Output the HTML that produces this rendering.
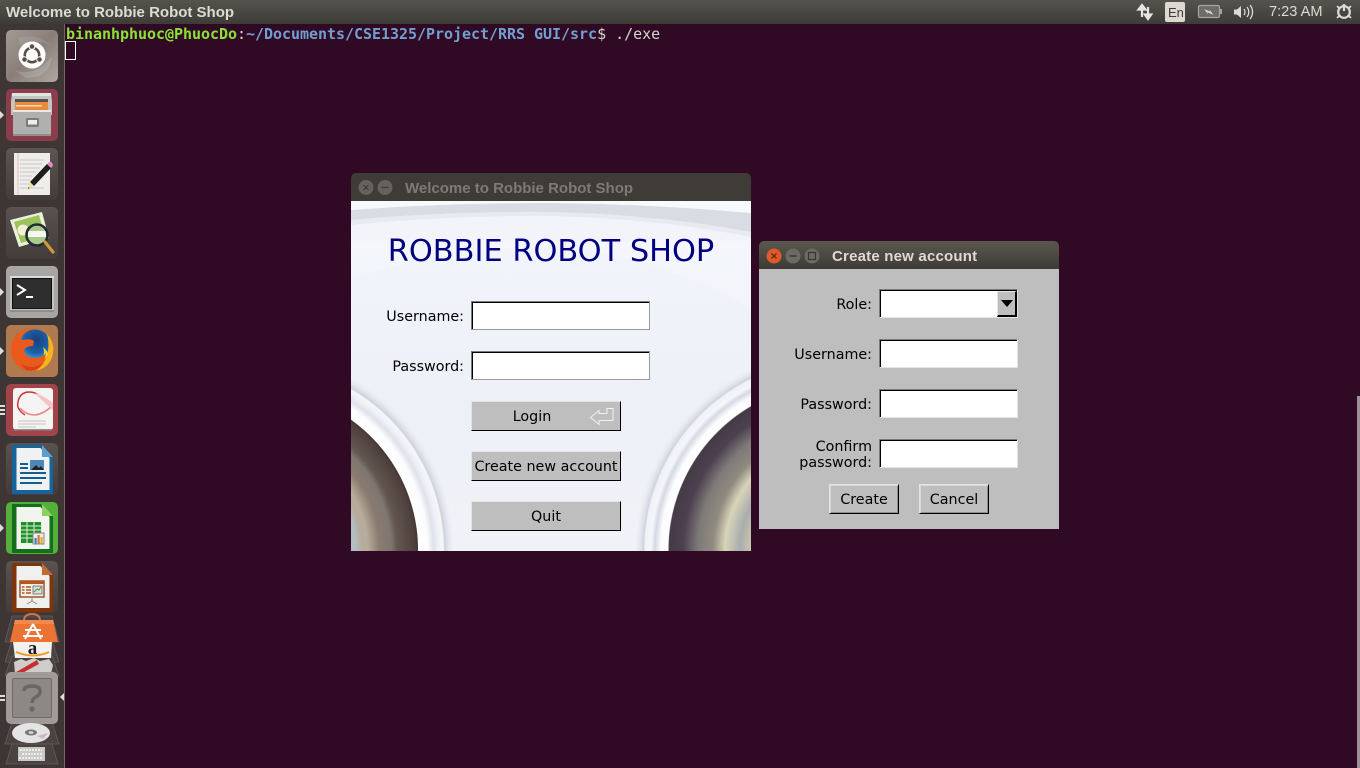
<!DOCTYPE html>
<html><head><meta charset="utf-8">
<style>
html,body{margin:0;padding:0;width:1360px;height:768px;overflow:hidden;background:#300a24}
*{box-sizing:border-box}
.a{position:absolute;white-space:nowrap}
.tk{font-family:"DejaVu Sans",sans-serif;font-size:14.3px;color:#000;line-height:16px}
.r{text-align:right}
.ent{position:absolute;background:#fff;border:1px solid;border-color:#7a7a7a #e4e4e4 #e4e4e4 #7a7a7a;box-shadow:inset 1px 1px 0 #000}
.e1{border-color:#7a7a7a #9a9a9a #9a9a9a #7a7a7a}
.btn{position:absolute;background:#bebebe;border-top:1px solid #e4e4e4;border-left:1px solid #e4e4e4;border-right:1px solid #000;border-bottom:1px solid #000;text-align:center;font-family:"DejaVu Sans",sans-serif;font-size:14.3px;color:#000;white-space:nowrap;line-height:30px}
.b2{box-shadow:inset 1px 1px 0 #d8d8d8,inset -1px -1px 0 #8e8e8e}
.tile{position:absolute;left:6px;width:52px;height:52px;border-radius:5px}
.pip{position:absolute;width:0;height:0;border-top:4px solid transparent;border-bottom:4px solid transparent;border-left:4px solid #ddd;left:0}
.dot{position:absolute;left:0;width:5px;height:2px;background:#ddd}
</style></head>
<body>
<!-- top bar -->
<div class="a" style="left:0;top:0;width:1360px;height:24px;background:linear-gradient(#54534d,#3d3c37)"></div>
<div class="a" style="left:6px;top:4px;font:bold 15px/18px 'Liberation Sans',sans-serif;color:#dfdbd2">Welcome to Robbie Robot Shop</div>
<svg class="a" style="left:1130px;top:0" width="230" height="24" viewBox="1130 0 230 24">
<path d="M1142 17V8M1138.500 9.500L1142 5l3.500 4.500z" stroke="#e8e6df" stroke-width="2.200" fill="#e8e6df"/>
<path d="M1148 7v10M1144.800 14.500l3.200 4.500 3.200-4.500z" stroke="#e8e6df" stroke-width="2.200" fill="#e8e6df"/>
<rect x="1165" y="2" width="20" height="20" rx="2" fill="#dcd9d1"/>
<rect x="1198.500" y="5.500" width="21" height="12" rx="1.500" fill="#6e6c66" stroke="#a8a59e" stroke-width="1.200"/>
<rect x="1220" y="9" width="2" height="5" fill="#a8a59e"/>
<path d="M1204 9l6 2.500-.5-2 4 5.500-6-2.800.5 2z" fill="#dcd9d2"/>
<path d="M1234 9.500h3l4-3.500v12l-4-3.500h-3z" fill="#dfdcd5"/>
<path d="M1244 9a5 5 0 0 1 0 6M1247 7a8 8 0 0 1 0 10M1250 5a11 11 0 0 1 0 14" fill="none" stroke="#dfdcd5" stroke-width="1.300"/>
<circle cx="1344" cy="12" r="5.800" fill="none" stroke="#dfdcd5" stroke-width="2.200"/>
<path d="M1344 4v7" stroke="#dfdcd5" stroke-width="2.200"/>
<path d="M1337 6l2 2M1351 6l-2 2M1337 18l2-2M1351 18l-2-2" stroke="#dfdcd5" stroke-width="1.600"/>
</svg>
<div class="a" style="left:1168px;top:5px;font:13px/15px 'Liberation Sans',sans-serif;color:#3c3b37">En</div>
<div class="a" style="left:1269px;top:4px;font:14.6px/17px 'Liberation Sans',sans-serif;color:#dfdbd2">7:23 AM</div>

<!-- launcher -->
<div class="a" style="left:0;top:24px;width:64px;height:744px;background:#3e3634"></div>
<div class="a" style="left:64px;top:24px;width:1px;height:744px;background:#6f6867"></div>

<!-- terminal -->
<div class="a" style="left:66px;top:25px;font:bold 15px/18px 'DejaVu Sans Mono','Liberation Mono',monospace;letter-spacing:-.03px;color:#8ae234">binanhphuoc@PhuocDo<span style="color:#d3d7cf;font-weight:400">:</span><span style="color:#729fcf">~/Documents/CSE1325/Project/RRS GUI/src</span><span style="color:#d3d7cf;font-weight:400">$ ./exe</span></div>
<div class="a" style="left:65px;top:41px;width:11px;height:19px;border:1px solid #fff"></div>
<div class="a" style="left:1357px;top:396px;width:3px;height:372px;background:#9b9297"></div>

<!-- launcher icons -->
<div class="tile" style="top:30px;background:linear-gradient(135deg,#a39a94,#8a7e78 50%,#b0a8a2)"></div>
<svg class="a" style="left:6px;top:30px" width="52" height="52" viewBox="0 0 52 52">
<path d="M8 40Q30 48 46 26Q44 48 20 48z" fill="#ffffff" opacity=".14"/><path d="M12 8Q30 2 46 16Q30 8 14 16z" fill="#fff" opacity=".1"/>
<circle cx="26" cy="25" r="13.500" fill="#fff"/>
<circle cx="26" cy="25" r="7.200" fill="none" stroke="#5b4c46" stroke-width="2.600"/>
<circle cx="26" cy="16.500" r="2.800" fill="#5b4c46" stroke="#fff"/><circle cx="18.500" cy="29.500" r="2.800" fill="#5b4c46" stroke="#fff"/><circle cx="33.500" cy="29.500" r="2.800" fill="#5b4c46" stroke="#fff"/>
</svg>

<div class="tile" style="top:89px;background:#8b3d4b"></div>
<svg class="a" style="left:6px;top:89px" width="52" height="52" viewBox="0 0 52 52">
<path d="M6 4h39l1 8v14H5V12z" fill="#c4c4c2"/><path d="M6 4h39v3H6z" fill="#e2e2e0"/><path d="M9 10h33v12H9z" fill="#55524e"/>
<path d="M9 13h33v8H9z" fill="#e9893d"/><path d="M10 16h26v1.500H10z" fill="#f7d9ac"/>
<path d="M7 21h38v26H7z" fill="#b0b0ae"/><path d="M7 21h38v2H7z" fill="#e8e8e6"/><path d="M7 45h38v2H7z" fill="#8e8e8c"/>
<rect x="20" y="29" width="13" height="9" rx="1.500" fill="#7c7c7a"/><rect x="22" y="31" width="9" height="4.500" fill="#eee"/>
</svg>

<div class="tile" style="top:148px;background:linear-gradient(#5d5553,#443c3a)"></div>
<svg class="a" style="left:6px;top:148px" width="52" height="52" viewBox="0 0 52 52">
<rect x="8" y="5" width="36" height="42" fill="#efedea"/><path d="M12 5v42" stroke="#e3bcbc"/>
<path d="M14 12h24M14 16h22M14 20h20M14 24h16M14 28h12M14 32h10M14 36h14M14 40h24" stroke="#c8c8c6"/>
<path d="M45 20L28 38l-4-4 17-18z" fill="#1d1d1d"/><path d="M41 16l2-2q2-1 3 1l1 2q0 1-2 3z" fill="#e88ac8"/><path d="M24 34l4 4-6 3z" fill="#f0e090"/><path d="M22 41l1.500-1-1-1z" fill="#222"/>
</svg>

<div class="tile" style="top:207px;background:linear-gradient(#5a5250,#443c3a)"></div>
<svg class="a" style="left:6px;top:207px" width="52" height="52" viewBox="0 0 52 52">
<path d="M4 13L36 5l7 26-30 9z" fill="#ecf0d8"/><path d="M8 15l25-7 6 21-24 7z" fill="#9cc25b"/><circle cx="17" cy="23" r="5.500" fill="#f3f0d8"/>
<circle cx="31" cy="28" r="10" fill="#a9c98c"/><path d="M22 24h18v6H22z" fill="#f5f7ef"/>
<circle cx="31" cy="28" r="10.500" fill="none" stroke="#222a30" stroke-width="2.600"/>
<path d="M39 35l8 10" stroke="#cf9a3e" stroke-width="3.200" stroke-linecap="round"/>
</svg>

<div class="tile" style="top:266px;background:#a7a6a3"></div>
<svg class="a" style="left:6px;top:266px" width="52" height="52" viewBox="0 0 52 52">
<rect x="4" y="10" width="44" height="36" fill="#c2c2c0"/><rect x="4" y="10" width="44" height="2" fill="#dcdcda"/><rect x="4" y="44" width="44" height="2" fill="#8e8e8c"/>
<rect x="6" y="12" width="40" height="31" fill="#111"/>
<rect x="7" y="13" width="38" height="29" fill="#2e2e2e"/>
<path d="M11 19l8 5-8 5" fill="none" stroke="#fff" stroke-width="2"/><path d="M20 31h7" stroke="#fff" stroke-width="2"/>
</svg>

<div class="tile" style="top:325px;background:#b07a50"></div>
<svg class="a" style="left:6px;top:325px" width="52" height="52" viewBox="0 0 52 52">
<defs><radialGradient id="fb" cx=".55" cy=".35" r=".7"><stop offset="0" stop-color="#1a3f80"/><stop offset=".6" stop-color="#1c62a8"/><stop offset="1" stop-color="#56b2e0"/></radialGradient></defs>
<circle cx="26" cy="25" r="21.500" fill="#e8601f"/>
<circle cx="29" cy="20" r="15.500" fill="url(#fb)"/>
<path d="M41 9Q49 18 47 28Q45 42 30 46Q38 40 41 30Q44 20 41 9z" fill="#f6b420"/>
<path d="M37 22Q40 30 34 36Q38 36 42 30Q42 26 37 22z" fill="#f0d040"/>
<path d="M6 20Q7 12 12 7Q11 13 17 15Q24 13 28 16L27 21Q19 21 18 26Q20 33 29 33Q36 33 40 28Q38 44 24 46Q5 44 6 20z" fill="#ea5a1c"/>
<path d="M14 38Q24 46 38 38Q30 47 20 45z" fill="#d8401a"/>
</svg>

<div class="tile" style="top:384px;background:#a14348"></div>
<svg class="a" style="left:6px;top:384px" width="52" height="52" viewBox="0 0 52 52">
<rect x="7" y="4" width="40" height="42" rx="3" fill="#f4f4f2"/><path d="M8 45h38v1.500H8z" fill="#8c8c8a"/>
<path d="M19 31Q10 25 12 18Q14 8 23 8Q30 8 33 12" fill="none" stroke="#d22d34" stroke-width="1.400"/>
<path d="M14 24Q20 31 29 31Q38 30 47 21" fill="none" stroke="#eb8a8e" stroke-width="1.600"/>
<path d="M29 9Q38 12 47 19V26Q36 17 29 9z" fill="#f3c4c4"/>
<path d="M12 37h28M12 40h28M12 43h18" stroke="#c4c4c2" stroke-width="1.100"/>
</svg>

<div class="tile" style="top:443px;background:linear-gradient(#5a5250,#443c3a)"></div>
<svg class="a" style="left:6px;top:443px" width="52" height="52" viewBox="0 0 52 52">
<path d="M6 2h29l12 12v37H6z" fill="#15659c"/><path d="M10.500 5h24l9 10v32h-33z" fill="#f0f2f2"/><path d="M36 2l11 12H36z" fill="#57a0d0"/>
<path d="M14 21h8M14 25h8M14 30h26M14 35h26M14 40h22" stroke="#115f93" stroke-width="2"/>
<rect x="24" y="17" width="14" height="10" fill="#4d88b8"/><path d="M25 27l5-5 3 3 2-2 3 4z" fill="#222"/>
</svg>

<div class="tile" style="top:502px;background:#56ae3d"></div>
<svg class="a" style="left:6px;top:502px" width="52" height="52" viewBox="0 0 52 52">
<path d="M6 2h29l12 12v37H6z" fill="#146f1b"/><path d="M10.500 5h24l9 10v32h-33z" fill="#f2f4f0"/><path d="M36 2l11 12H36z" fill="#8fcf5f"/>
<rect x="14" y="20" width="22" height="21" fill="#1f8f27"/>
<path d="M14.500 20v21M21 20v21M28 20v21M35.500 20v21M14 24h22M14 28h22M14 32h22M14 36h22" stroke="#dff2d8"/>
<rect x="27" y="31" width="11" height="11" fill="#ececec" stroke="#888"/><rect x="28.500" y="36" width="2.200" height="5.500" fill="#2b8bd0"/><rect x="31.500" y="33" width="2.200" height="8.500" fill="#e2722c"/><rect x="34.500" y="35" width="2.200" height="6.500" fill="#d9b52a"/>
</svg>

<div class="tile" style="top:561px;background:linear-gradient(#5c5250,#443c3a)"></div>
<svg class="a" style="left:6px;top:561px" width="52" height="52" viewBox="0 0 52 52">
<path d="M6 2h29l12 12v37H6z" fill="#7e340d"/><path d="M10.500 5h24l9 10v32h-33z" fill="#f0f0ec"/><path d="M36 2l11 12H36z" fill="#c06a36"/>
<rect x="14" y="20" width="24" height="16" fill="#f0f0ec" stroke="#9c4a1c" stroke-width="1.400"/><rect x="14" y="20" width="24" height="3" fill="#b8561f"/>
<path d="M16 26h2.500M20 26h5M16 29h2.500M20 29h5M16 32h2.500M20 32h5" stroke="#b8561f" stroke-width="1.500"/>
<rect x="27" y="25" width="9" height="8" fill="#ddd" stroke="#555" stroke-width=".7"/><path d="M28 31l3-3 2 1 2-3" stroke="#3a9a3a" fill="none"/>
<path d="M26 36v4l-5 3M26 40l5 3" stroke="#888" fill="none"/>
</svg>

<!-- stacked launcher -->
<svg class="a" style="left:0;top:610px" width="64" height="158" viewBox="0 0 64 158">
<g fill="#4a4240" stroke="#665d5b" stroke-width=".8">
<path d="M12 6h40l7 26H5z"/><path d="M12 30h40l7 22H5z"/><path d="M12 46h40l7 20H5z"/><path d="M12 112h40l7 22H5z"/><path d="M12 134h40l6 20H6z"/>
</g>
<path d="M24 11q0-7 8-7t8 7" fill="none" stroke="#d57242" stroke-width="2"/>
<path d="M15 10h38l5 22H10z" fill="#ec7334"/><path d="M15 10h38l1 4H14z" fill="#f08a50"/>
<path d="M33 14l-8 15M33 14l8 15M25 20h16M23 26h20" stroke="#fff" stroke-width="2" fill="none"/>
<path d="M13 32h39l-1 16H15z" fill="#f3f1ee"/>
<text x="32.500" y="44" text-anchor="middle" font-family="'Liberation Serif',serif" font-weight="bold" font-size="19" fill="#1f1f1f">a</text>
<path d="M16 42q17 7 33 0" stroke="#ef9b26" stroke-width="2" fill="none"/>
<path d="M14 52l7-3 5 2 8-3 6 3 9-2 4 6-2 9H15z" fill="#cfcdc9"/>
<path d="M11 65L37 50l2 4-24 13z" fill="#c72e2e"/>
<rect x="6" y="62" width="52" height="52" rx="5" fill="#a09b98"/>
<rect x="12" y="68" width="40" height="40" rx="2" fill="#6f6b68"/><rect x="13" y="69" width="38" height="38" fill="#8d8885"/>
<path d="M24 81q0-5 8-5t8 5q0 4-4 6t-4 6" fill="none" stroke="#6a6663" stroke-width="3.400"/><circle cx="32" cy="99" r="2.600" fill="#6a6663"/>
<ellipse cx="31" cy="123" rx="19" ry="10" fill="#e4e4e4"/><ellipse cx="31" cy="122.500" rx="6" ry="3" fill="#777"/><ellipse cx="31" cy="122.500" rx="2.500" ry="1.300" fill="#ddd"/>
<path d="M37 126l11-3-5 6z" fill="#cfb9c0"/>
<rect x="18" y="137" width="27" height="14" fill="#c9c9c7"/><path d="M20 140h22M22 144h20M19 148h24" stroke="#ececea" stroke-width="2" stroke-dasharray="2 1"/>
</svg>

<!-- launcher pips -->
<div class="pip" style="top:111px"></div><div class="pip" style="top:288px"></div><div class="pip" style="top:347px"></div><div class="pip" style="top:524px"></div>
<div class="dot" style="top:405px"></div><div class="dot" style="top:409px"></div><div class="dot" style="top:413px"></div>
<div class="dot" style="top:695px"></div><div class="dot" style="top:699px"></div>
<div class="a" style="left:60px;top:693px;width:0;height:0;border-top:4px solid transparent;border-bottom:4px solid transparent;border-right:4px solid #ddd"></div>

<!-- window 1 -->
<div class="a" style="left:351px;top:173px;width:400px;height:28px;background:#3f3c37;border-radius:5px 5px 0 0"></div>
<svg class="a" style="left:351px;top:173px" width="60" height="28">
<circle cx="15" cy="14.500" r="7.500" fill="#65625c"/><path d="M12.500 12l5 5M17.500 12l-5 5" stroke="#3f3c37" stroke-width="1.200"/>
<circle cx="34" cy="14.500" r="7.500" fill="#65625c"/><path d="M30.500 14.500h7" stroke="#3f3c37" stroke-width="1.400"/>
</svg>
<div class="a" style="left:405px;top:180px;font:bold 15px/18px 'Liberation Sans',sans-serif;color:#7d7a74">Welcome to Robbie Robot Shop</div>
<svg class="a" style="left:351px;top:201px" width="400" height="350" viewBox="0 0 400 350">
<defs>
<linearGradient id="bg" x1="0" y1="0" x2="0" y2="1"><stop offset="0" stop-color="#f3f5fb"/><stop offset=".6" stop-color="#edf0f7"/><stop offset="1" stop-color="#f0f2f7"/></linearGradient>
<radialGradient id="rl" gradientUnits="userSpaceOnUse" cx="-93" cy="349" r="196">
<stop offset="0" stop-color="#b5bdc0"/><stop offset=".5" stop-color="#b5bdc0"/><stop offset=".53" stop-color="#b7ab9b"/><stop offset=".56" stop-color="#b7ab9b"/><stop offset=".62" stop-color="#8b7b70"/><stop offset=".68" stop-color="#7e7770"/><stop offset=".71" stop-color="#645750"/><stop offset=".8" stop-color="#4d403d"/><stop offset=".815" stop-color="#433734"/>
<stop offset=".818" stop-color="#ffffff"/><stop offset=".865" stop-color="#fbfcfd"/><stop offset=".895" stop-color="#dfe2ea"/><stop offset=".92" stop-color="#eef0f5"/><stop offset=".945" stop-color="#f6f7fa"/><stop offset=".952" stop-color="#cdd1da"/><stop offset="1" stop-color="#e6e9f1" stop-opacity="0"/>
</radialGradient>
<radialGradient id="rr" gradientUnits="userSpaceOnUse" cx="484" cy="349" r="200">
<stop offset="0" stop-color="#c8c6ae"/><stop offset=".42" stop-color="#c8c6ae"/><stop offset=".475" stop-color="#a9adad"/><stop offset=".55" stop-color="#d8d4b8"/><stop offset=".61" stop-color="#8f8b80"/><stop offset=".685" stop-color="#7d7a78"/><stop offset=".76" stop-color="#4d4050"/><stop offset=".83" stop-color="#453a46"/>
<stop offset=".835" stop-color="#ffffff"/><stop offset=".87" stop-color="#fbfcfe"/><stop offset=".9" stop-color="#d5d9e3"/><stop offset=".92" stop-color="#f4f6fa"/><stop offset=".95" stop-color="#eff1f6"/><stop offset=".957" stop-color="#cfd3dc"/><stop offset="1" stop-color="#e6e9f1" stop-opacity="0"/>
</radialGradient>
<clipPath id="c"><rect width="400" height="350"/></clipPath>
</defs>
<g clip-path="url(#c)">
<rect width="400" height="350" fill="url(#bg)"/>
<path d="M0 78Q90 48 190 46Q300 50 400 108V40H0z" fill="#f5f7fc" opacity=".6"/>
<path d="M0 19Q100 10 200 11Q310 14 400 31V12Q300 3 200 2Q90 2 0 9z" fill="#d9dce3"/>
<path d="M0 9Q90 2 200 2Q300 3 400 12V0H0z" fill="#f8f9fc"/>
<path d="M0 24Q100 14 200 15Q310 18 400 36V31Q310 14 200 11Q100 10 0 19z" fill="#e7eaf1"/>
<circle cx="-93" cy="349" r="196" fill="url(#rl)"/>
<circle cx="484" cy="349" r="200" fill="url(#rr)"/>
</g>
</svg>
<div class="a" style="left:351px;top:233px;width:400px;text-align:center;font:30.4px/38px 'DejaVu Sans',sans-serif;color:#000080">ROBBIE ROBOT SHOP</div>
<div class="a tk r" style="left:351px;width:113px;top:309px">Username:</div>
<div class="a tk r" style="left:351px;width:113px;top:359px">Password:</div>
<div class="ent e1" style="left:471px;top:301px;width:179px;height:29px"></div>
<div class="ent e1" style="left:471px;top:351px;width:179px;height:29px"></div>
<div class="btn" style="left:471px;top:401px;width:150px;height:30px;padding-right:28px">Login</div>
<svg class="a" style="left:589px;top:406px" width="26" height="20"><path d="M1.500 11.500L10 4.500v3h8v-5h6v12H10v4z" fill="#bebebe" stroke="#f2f2f2" stroke-width="1"/></svg>
<div class="btn" style="left:471px;top:451px;width:150px;height:30px">Create new account</div>
<div class="btn" style="left:471px;top:501px;width:150px;height:30px">Quit</div>

<!-- window 2 -->
<div class="a" style="left:759px;top:241px;width:300px;height:28px;background:linear-gradient(#5a574f,#3f3c37);border-radius:5px 5px 0 0"></div>
<div class="a" style="left:759px;top:269px;width:300px;height:260px;background:#bebebe"></div>
<svg class="a" style="left:759px;top:241px" width="70" height="28">
<circle cx="15" cy="15" r="7.500" fill="#e0592a"/><path d="M12.500 12.500l5 5M17.500 12.500l-5 5" stroke="#5a2010" stroke-width="1.200"/>
<circle cx="34" cy="15" r="7.500" fill="#6d6a63"/><path d="M30.500 15h7" stroke="#36342f" stroke-width="1.400"/>
<circle cx="53" cy="15" r="7.500" fill="#6d6a63"/><rect x="49.500" y="11.500" width="7" height="7" fill="none" stroke="#36342f" stroke-width="1.200"/>
</svg>
<div class="a" style="left:832px;top:248px;font:bold 15px/18px 'Liberation Sans',sans-serif;color:#dfdbd2;letter-spacing:.2px">Create new account</div>
<div class="a tk r" style="left:759px;width:113px;top:297px">Role:</div>
<div class="a tk r" style="left:759px;width:113px;top:347px">Username:</div>
<div class="a tk r" style="left:759px;width:113px;top:397px">Password:</div>
<div class="a tk r" style="left:759px;width:113px;top:439px">Confirm<br>password:</div>
<div class="ent" style="left:879px;top:289px;width:139px;height:29px"></div>
<div class="a" style="left:997px;top:291px;width:20px;height:26px;background:#bebebe;border-top:1px solid #e6e6e6;border-left:1px solid #e6e6e6;border-right:2px solid #000;border-bottom:2px solid #000"></div>
<div class="a" style="left:1001px;top:300px;width:0;height:0;border-left:6px solid transparent;border-right:6px solid transparent;border-top:7px solid #000"></div>
<div class="ent" style="left:879px;top:339px;width:139px;height:29px"></div>
<div class="ent" style="left:879px;top:389px;width:139px;height:29px"></div>
<div class="ent" style="left:879px;top:439px;width:139px;height:29px"></div>
<div class="btn b2" style="left:829px;top:484px;width:70px;height:30px">Create</div>
<div class="btn b2" style="left:919px;top:484px;width:70px;height:30px">Cancel</div>
</body></html>
